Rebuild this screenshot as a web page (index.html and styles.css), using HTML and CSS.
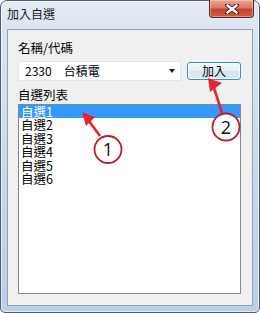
FILE: index.html
```html
<!DOCTYPE html>
<html lang="zh-Hant">
<head>
<meta charset="utf-8">
<title>加入自選</title>
<link rel="stylesheet" href="styles.css">
</head>
<body>
<div class="window">
  <div class="titlebar">
    <span class="title">加入自選</span>
    <div class="close">
      <svg width="14" height="10" viewBox="0 0 14 10">
        <path d="M2 1 L12 9 M12 1 L2 9" stroke="#4a2018" stroke-width="4.2" stroke-linecap="square"/>
        <path d="M2.5 1.5 L11.5 8.5 M11.5 1.5 L2.5 8.5" stroke="#ffffff" stroke-width="2.4" stroke-linecap="square"/>
      </svg>
    </div>
  </div>
  <div class="client">
    <div class="label">名稱/代碼</div>
    <div class="row">
      <div class="combo">
        <span class="code">2330</span><span class="name">台積電</span>
        <span class="arrow"></span>
      </div>
      <div class="btn">加入</div>
    </div>
    <div class="label label-list">自選列表</div>
    <ul class="list">
      <li class="item selected">自選1</li>
      <li class="item">自選2</li>
      <li class="item">自選3</li>
      <li class="item">自選4</li>
      <li class="item">自選5</li>
      <li class="item">自選6</li>
    </ul>
  </div>
  <svg class="annot" width="260" height="313" viewBox="0 0 260 313">
    <line x1="100" y1="136" x2="89" y2="121" stroke="#e3262e" stroke-width="2.6"/>
    <polygon points="82,112 95,117 86,126" fill="#e3262e"/>
    <circle cx="108" cy="149.5" r="13.5" fill="#ffffff" stroke="#b81f27" stroke-width="1.8"/>
    <text x="108" y="156" text-anchor="middle" class="num">1</text>
    <line x1="222" y1="113" x2="214" y2="88" stroke="#e3262e" stroke-width="2.6"/>
    <polygon points="208,78 222,83 210,92" fill="#e3262e"/>
    <circle cx="226" cy="127" r="13.5" fill="#ffffff" stroke="#b81f27" stroke-width="1.8"/>
    <text x="226" y="133.5" text-anchor="middle" class="num">2</text>
  </svg>
</div>
</body>
</html>
```

FILE: styles.css
```css
* { box-sizing: border-box; }
html, body {
  margin: 0;
  padding: 0;
  background: #ffffff;
}
body {
  width: 260px;
  height: 313px;
  overflow: hidden;
  font-family: "Noto Sans CJK TC", "Noto Sans", sans-serif;
  font-size: 12px;
  color: #000;
}
.window {
  position: relative;
  width: 260px;
  height: 313px;
  display: flex;
  flex-direction: column;
  border: 1px solid #4e5f74;
  border-radius: 7px 7px 5px 5px;
  background: linear-gradient(180deg, #e3ebf4 0%, #d9e4f0 12%, #c7d8ea 60%, #b9cfe6 100%);
  box-shadow: inset 0 0 0 1px rgba(255, 255, 255, 0.55);
}
.titlebar {
  height: 28px;
  flex: none;
  display: flex;
  justify-content: space-between;
  align-items: flex-start;
  padding-left: 6px;
}
.title {
  margin-top: 5px;
  font-size: 12px;
  line-height: 16px;
  color: #1a1a1a;
}
.close {
  width: 45px;
  height: 18px;
  margin-top: -1px;
  margin-right: 5px;
  border: 1px solid #5a2a22;
  border-top: none;
  border-radius: 0 0 4px 4px;
  background: linear-gradient(180deg, #e9a99a 0%, #dc7763 45%, #c9412e 55%, #cf5a3f 100%);
  box-shadow: inset 0 0 0 1px rgba(255, 210, 200, 0.45);
  display: flex;
  align-items: center;
  justify-content: center;
}
.client {
  flex: 1;
  margin: 0 6px 6px 6px;
  border: 1px solid #8ea3b9;
  background: #f0f0f0;
  padding: 10px 11px 11px 10px;
  display: flex;
  flex-direction: column;
}
.label {
  line-height: 16px;
  font-size: 12.5px;
  color: #000;
}
.row {
  display: flex;
  align-items: center;
  margin-top: 5px;
  height: 20px;
}
.combo {
  flex: 1;
  height: 20px;
  position: relative;
  background: #ffffff;
  border: 1px solid #e2e4e7;
  padding-left: 6px;
  line-height: 18px;
  font-size: 12px;
  display: flex;
  align-items: center;
}
.code { margin-right: 12px; }
.arrow {
  position: absolute;
  right: 5px;
  top: 7px;
  width: 0;
  height: 0;
  border-left: 3.5px solid transparent;
  border-right: 3.5px solid transparent;
  border-top: 4px solid #1a1a1a;
}
.btn {
  width: 54px;
  height: 18px;
  margin-left: 6px;
  border: 1px solid #3d8fc9;
  border-radius: 3px;
  background: linear-gradient(180deg, #f3f8fc 0%, #e6eff7 48%, #d7e5f1 52%, #dde9f3 100%);
  box-shadow: inset 0 0 0 1px rgba(255, 255, 255, 0.7);
  text-align: center;
  line-height: 16px;
  font-size: 12px;
}
.label-list {
  margin-top: 6px;
}
.list {
  flex: 1;
  list-style: none;
  margin: 1px 0 0 0;
  padding: 0;
  background: #ffffff;
  border: 1px solid #828790;
}
.item {
  height: 13.4px;
  line-height: 13.4px;
  padding-left: 2px;
  font-size: 12.5px;
}
.item.selected {
  background: #3399ff;
  color: #ffffff;
}
.annot {
  position: absolute;
  left: -1px;
  top: -1px;
  pointer-events: none;
}
.num {
  font-family: "Open Sans", "DejaVu Sans", sans-serif;
  font-size: 18px;
  fill: #111111;
}
```
